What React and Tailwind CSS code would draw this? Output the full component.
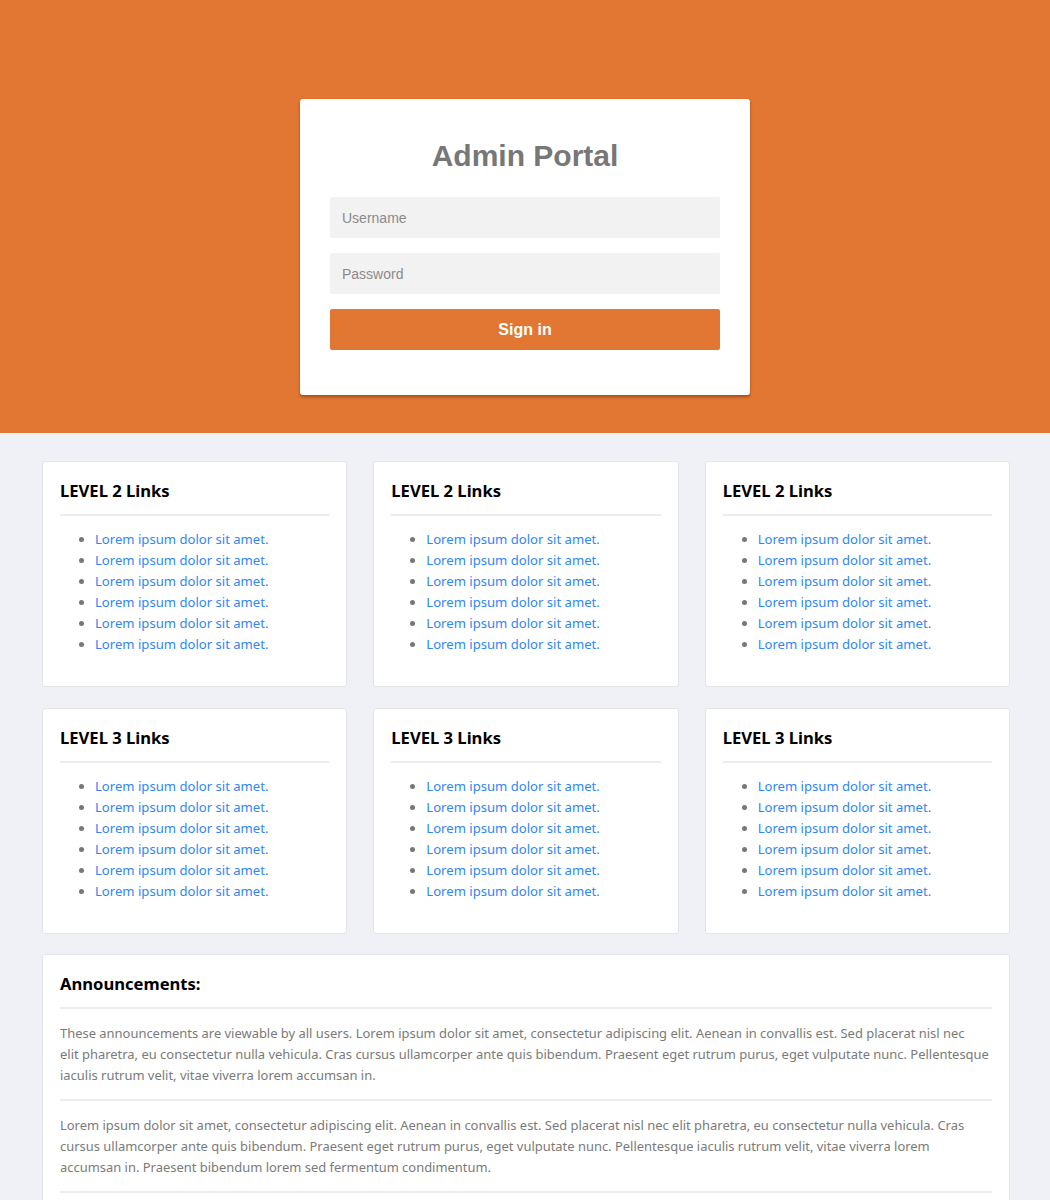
import React from "react";

const items = Array.from({ length: 6 });

function LinkCard({ title }) {
  return (
    <div className="bg-white border border-[#e3e4e8] rounded-[3px] px-[17px] pt-[17px] pb-[31px]">
      <h3 className="text-[16.6px] leading-[24px] font-bold text-black">{title}</h3>
      <div className="h-[2px] bg-[#ececef] mt-[11px] mb-[13px]" />
      <ul className="list-disc pl-[35px] marker:text-[#777]">
        {items.map((_, i) => (
          <li key={i} className="text-[13.1px] leading-[21px]">
            <a href="#" className="text-[#2f86f6]">Lorem ipsum dolor sit amet.</a>
          </li>
        ))}
      </ul>
    </div>
  );
}

export default function App() {
  return (
    <div className="min-h-[1200px] bg-[#f0f1f6]" style={{ fontFamily: "'Noto Sans', sans-serif" }}>
      <header className="bg-[#e27733] h-[433px] pt-[99px]">
        <div className="mx-auto w-[450px] h-[296px] bg-white rounded-[3px] shadow-[0_2px_3px_rgba(80,30,0,0.45)] px-[30px] pt-[37px]">
          <h1
            className="text-center text-[30px] leading-[40px] font-bold text-[#777777]"
            style={{ fontFamily: "'Liberation Sans', Arial, sans-serif" }}
          >
            Admin Portal
          </h1>
          <form
            className="mt-[21px] flex flex-col gap-[15px]"
            style={{ fontFamily: "'Liberation Sans', Arial, sans-serif" }}
            onSubmit={(e) => e.preventDefault()}
          >
            <input
              type="text"
              placeholder="Username"
              className="h-[41px] bg-[#f2f2f2] rounded-[2px] px-[12px] text-[14px] text-[#555] placeholder:text-[#8a8a8a] outline-none"
            />
            <input
              type="password"
              placeholder="Password"
              className="h-[41px] bg-[#f2f2f2] rounded-[2px] px-[12px] text-[14px] text-[#555] placeholder:text-[#8a8a8a] outline-none"
            />
            <button
              type="submit"
              className="h-[41px] bg-[#e27733] rounded-[2px] text-white font-bold text-[16px]"
            >
              Sign in
            </button>
          </form>
        </div>
      </header>
      <main className="ml-[42px] w-[968px] pt-[28px]">
        <div className="grid grid-cols-3 gap-x-[26px] gap-y-[21px]">
          <LinkCard title="LEVEL 2 Links" />
          <LinkCard title="LEVEL 2 Links" />
          <LinkCard title="LEVEL 2 Links" />
          <LinkCard title="LEVEL 3 Links" />
          <LinkCard title="LEVEL 3 Links" />
          <LinkCard title="LEVEL 3 Links" />
        </div>
        <div className="mt-[20px] bg-white border border-[#e3e4e8] rounded-[3px] px-[17px] pt-[17px] pb-[20px]">
          <h3 className="text-[16.6px] leading-[24px] font-bold text-black">Announcements:</h3>
          <div className="h-[2px] bg-[#ececef] mt-[11px]" />
          <p className="text-[12.95px] leading-[21px] text-[#7a7a7a] pt-[14px] pb-[13px]">
            These announcements are viewable by all users. Lorem ipsum dolor sit amet, consectetur adipiscing elit. Aenean in convallis est. Sed placerat nisl nec
            <br />
            elit pharetra, eu consectetur nulla vehicula. Cras cursus ullamcorper ante quis bibendum. Praesent eget rutrum purus, eget vulputate nunc. Pellentesque iaculis rutrum velit, vitae viverra lorem accumsan in.
          </p>
          <div className="h-[2px] bg-[#ececef]" />
          <p className="text-[12.95px] leading-[21px] text-[#7a7a7a] pt-[14px] pb-[13px]">
            Lorem ipsum dolor sit amet, consectetur adipiscing elit. Aenean in convallis est. Sed placerat nisl nec elit pharetra, eu consectetur nulla vehicula. Cras cursus ullamcorper ante quis bibendum. Praesent eget rutrum purus, eget vulputate nunc. Pellentesque iaculis rutrum velit, vitae viverra lorem accumsan in. Praesent bibendum lorem sed fermentum condimentum.
          </p>
          <div className="h-[2px] bg-[#ececef]" />
          <p className="text-[12.95px] leading-[21px] text-[#7a7a7a] pt-[14px] pb-[13px]">
            Lorem ipsum dolor sit amet, consectetur adipiscing elit. Aenean in convallis est. Sed placerat nisl nec elit pharetra, eu consectetur nulla vehicula.
          </p>
        </div>
      </main>
    </div>
  );
}
